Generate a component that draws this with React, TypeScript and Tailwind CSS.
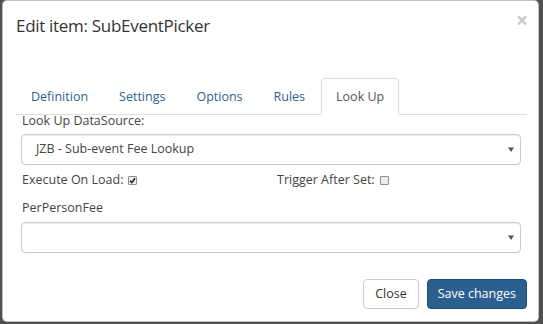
const Arrow = () => (
  <svg width="6" height="5" viewBox="0 0 6 5" className="shrink-0">
    <path d="M0 0.5 H6 L3 5 Z" fill="#555" />
  </svg>
);

const Select = ({ value }: { value?: string }) => (
  <div className="flex h-[31px] items-center justify-between rounded-[4px] border border-[#cccccc] bg-white pl-[14px] pr-[6px] shadow-[inset_0_1px_1px_rgba(0,0,0,0.075)]">
    <span className="text-[#444]">{value}</span>
    <Arrow />
  </div>
);

const Check = ({ checked }: { checked?: boolean }) => (
  <span className="ml-[5px] inline-flex h-[9px] w-[9px] items-center justify-center rounded-[1px] border border-[#8f8f8f] bg-[#ededed]">
    {checked && (
      <svg width="7" height="7" viewBox="0 0 7 7">
        <path d="M1 3.8 L2.8 5.6 L6 1.2" stroke="#222" strokeWidth="1.6" fill="none" />
      </svg>
    )}
  </span>
);

const tabs = ["Definition", "Settings", "Options", "Rules", "Look Up"];

export default function App() {
  return (
    <div
      className="flex h-[324px] w-[543px] bg-[#505050] pb-[2px] pl-[2px] pr-[4px] text-[12.5px] text-[#444]"
      style={{ fontFamily: '"Open Sans", "Noto Sans", sans-serif' }}
    >
      <div className="flex flex-1 flex-col rounded-[5px] border border-[rgba(0,0,0,0.25)] bg-white">
        <div className="relative px-[13px] pt-[13px]">
          <h1 className="text-[17px] leading-[24px] tracking-[-0.3px] text-[#333]">Edit item: SubEventPicker</h1>
          <span className="absolute right-[10px] top-[7px] text-[21px] font-bold leading-[24px] text-[#c8c8c8]">×</span>
        </div>
        <div className="mr-[11px] ml-[13px] mt-[40px] flex gap-[1px] border-b border-[#dddddd]">
          {tabs.map((t) => {
            const active = t === "Look Up";
            return (
              <div
                key={t}
                className={
                  active
                    ? "-mb-px h-[37px] rounded-t-[4px] border border-[#dddddd] border-b-white bg-white px-[14px] leading-[35px] text-[#555]"
                    : "h-[36px] border border-transparent px-[14px] leading-[35px] text-[#2f5f8f]"
                }
              >
                {t}
              </div>
            );
          })}
        </div>
        <div className="mr-[17px] ml-[18px] flex flex-col">
          <div className="ml-[1px] leading-[12px]">Look Up DataSource:</div>
          <div className="mt-[7px]">
            <Select value="JZB - Sub-event Fee Lookup" />
          </div>
          <div className="mt-[6px] flex items-center leading-[18px]">
            <div className="ml-[1px] flex w-[255px] items-center">
              Execute On Load:
              <Check checked />
            </div>
            <div className="flex items-center">
              Trigger After Set:
              <Check />
            </div>
          </div>
          <div className="ml-[1px] mt-[10px] leading-[18px]">PerPersonFee</div>
          <div className="mt-[5px]">
            <Select />
          </div>
        </div>
        <div className="mt-auto mb-[12px] mr-[11px] flex justify-end gap-[8px]">
          <button className="h-[30px] rounded-[4px] border border-[#cccccc] bg-white px-[11px] text-[#333]">
            Close
          </button>
          <button className="h-[30px] rounded-[4px] border border-[#204d74] bg-[#2b5f8f] px-[10px] text-white">
            Save changes
          </button>
        </div>
      </div>
    </div>
  );
}
